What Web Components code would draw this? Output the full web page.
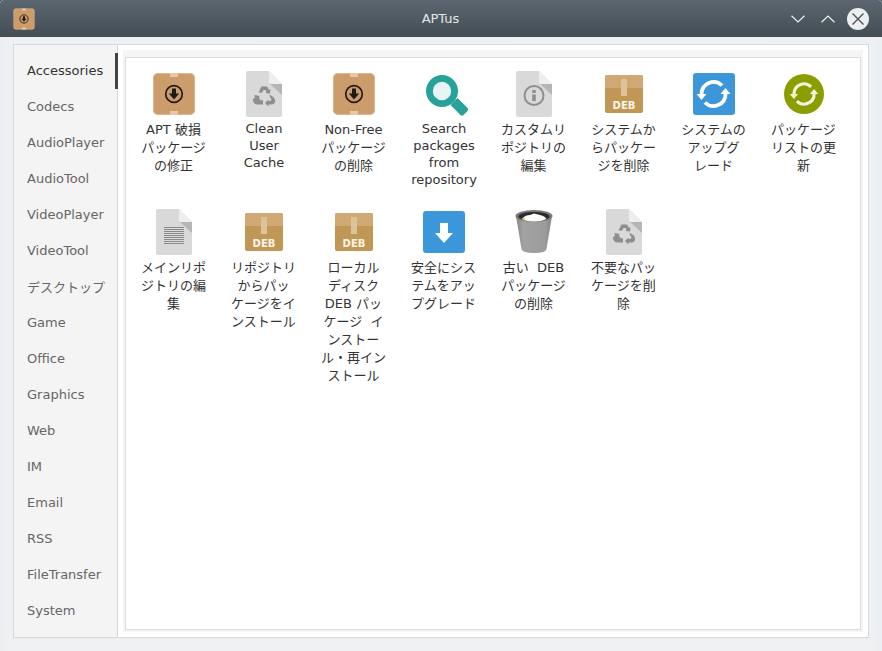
<!DOCTYPE html>
<html><head><meta charset="utf-8">
<style>
html,body{margin:0;padding:0;height:100%;background:#3a4650;overflow:hidden}
body{font:13px "DejaVu Sans","Noto Sans CJK JP",sans-serif}
</style></head>
<body>
<aptus-window>
  <aptus-titlebar title="APTus"></aptus-titlebar>
  <aptus-frame>
    <aptus-sidebar slot="side">
      <side-item active>Accessories</side-item><side-item>Codecs</side-item><side-item>AudioPlayer</side-item><side-item>AudioTool</side-item><side-item>VideoPlayer</side-item><side-item>VideoTool</side-item><side-item>デスクトップ</side-item><side-item>Game</side-item><side-item>Office</side-item><side-item>Graphics</side-item><side-item>Web</side-item><side-item>IM</side-item><side-item>Email</side-item><side-item>RSS</side-item><side-item>FileTransfer</side-item><side-item>System</side-item>
    </aptus-sidebar>
    <app-grid slot="main">
      <app-item icon="box" cjk>APT 破損<br>パッケージ<br>の修正</app-item>
      <app-item icon="recycle">Clean<br>User<br>Cache</app-item>
      <app-item icon="box" cjk>Non-Free<br>パッケージ<br>の削除</app-item>
      <app-item icon="search">Search<br>packages<br>from<br>repository</app-item>
      <app-item icon="info" cjk>カスタムリ<br>ポジトリの<br>編集</app-item>
      <app-item icon="deb" cjk>システムか<br>らパッケー<br>ジを削除</app-item>
      <app-item icon="upgrade" cjk>システムの<br>アップグ<br>レード</app-item>
      <app-item icon="update" cjk>パッケージ<br>リストの更<br>新</app-item>
      <app-item icon="text" cjk>メインリポ<br>ジトリの編<br>集</app-item>
      <app-item icon="deb" cjk>リポジトリ<br>からパッ<br>ケージをイ<br>ンストール</app-item>
      <app-item icon="deb" cjk>ローカル<br>ディスク<br>DEB パッ<br>ケージ&nbsp;&nbsp;イ<br>ンストー<br>ル・再イン<br>ストール</app-item>
      <app-item icon="download" cjk>安全にシス<br>テムをアッ<br>プグレード</app-item>
      <app-item icon="trash" cjk>古い&nbsp;&nbsp;DEB<br>パッケージ<br>の削除</app-item>
      <app-item icon="recycle" cjk>不要なパッ<br>ケージを削<br>除</app-item>
    </app-grid>
  </aptus-frame>
</aptus-window>
<script>
const rec=`<path d="M18.500 22.500 21.500 16.500H27L29 20 30.500 19 30 23.500 25.500 23 26.500 21.500 25.500 20H23.500L22 22.800Z"/><path d="M14.500 25 20 26 18.800 27 20.500 30.200H23V34.500H17Q15 34.500 14 32.800L13 31Q12.500 29.500 13.500 28.500L14.800 28.200Z"/><path d="M29.500 24.500 33.800 27.500 35 30Q35.500 31.500 34.500 33 33.500 34.500 31.500 34.500H28.500V36.500L25 33 28.500 29.500V31H30.500L31.500 29.500 30.200 27.500Z"/>`;
const fileBase=(inner)=>`<path d="M8 1H29L42 14V45Q42 47 40 47H8Q6 47 6 45V3Q6 1 8 1Z" fill="#d9d9d9"/><path d="M30 14H42V25Z" fill="#b5b5b5"/><path d="M29 1L42 14H31Q29 14 29 12Z" fill="#eeeeee"/>${inner}`;
const box=`<rect x="3" y="3" width="42" height="42" rx="5" fill="#cc9c6b"/><rect x="3.500" y="3.500" width="41" height="41" rx="4.500" fill="none" stroke="#e6c8a6" stroke-opacity=".6"/><rect x="20" y="3" width="8" height="4" fill="#e8c8a8"/><rect x="20" y="41" width="8" height="4" fill="#e8c8a8"/><circle cx="24" cy="24" r="8.300" fill="none" stroke="#1e1a16" stroke-width="1.700"/><path d="M22 18.500h4v5h3.200L24 29.500l-5.200-6H22z" fill="#1e1a16"/>`;
const deb=`<rect x="5" y="5" width="38" height="38" rx="2" fill="#c19755"/><path d="M5 18V7q0-2 2-2h34q2 0 2 2v11z" fill="#d0a974"/><rect x="21" y="9" width="6" height="17" fill="#dcc39c"/><text x="24" y="38.500" text-anchor="middle" font-family="DejaVu Sans" font-weight="700" font-size="10" fill="#fbf5ea">DEB</text>`;
const sync=(c)=>`<g fill="none" stroke="${c}" stroke-width="3.800"><path d="M8.500-8.500A12 12 0 0 0-12 0"/><path d="M-8.500 8.500A12 12 0 0 0 12 0"/></g><path d="M-17 0H-7L-12 6Z M17 0H7L12-6Z" fill="${c}"/>`;
const ICONS={
 box,deb,
 recycle:fileBase(`<g fill="#8e8e8e">${rec}</g>`),
 info:fileBase(`<circle cx="24" cy="25.500" r="9.500" fill="none" stroke="#8e8e8e" stroke-width="2"/><rect x="22.200" y="24.500" width="3.600" height="6.500" fill="#8e8e8e"/><rect x="22.200" y="20" width="3.600" height="3" fill="#8e8e8e"/>`),
 text:fileBase(`<g fill="#8a8a8a">${[...Array(9)].map((_,i)=>`<rect x="14" y="${19+i*2}" width="20" height="1"/>`).join('')}</g>`),
 search:`<path d="M34 36l7-7 10 10q1.500 1.500 0 3l-4 4q-1.500 1.500-3 0z" transform="translate(-3.500 -1)" fill="#26a298"/><circle cx="22" cy="21" r="12.600" fill="#e8f4f3" stroke="#26a298" stroke-width="6.800"/>`,
 upgrade:`<rect x="3" y="3" width="42" height="42" rx="3" fill="#3b97d9"/><g transform="translate(23.500 24)">${sync('#fff')}</g>`,
 update:`<circle cx="24" cy="24" r="20" fill="#8a9e00"/><g transform="translate(24 24) scale(.84)">${sync('#eff3dc')}</g>`,
 download:`<rect x="3" y="3" width="42" height="42" rx="3" fill="#3b97d9"/><path d="M20 15h8v10h5L24 35 15 25h5z" fill="#fff"/>`,
 trash:`<defs><linearGradient id="t" x1="0" x2="1"><stop offset="0" stop-color="#888"/><stop offset=".2" stop-color="#a2a2a2"/><stop offset=".8" stop-color="#9c9c9c"/><stop offset="1" stop-color="#858585"/></linearGradient></defs><path d="M6 8Q7 14 11.500 41q.5 4 12.500 4t12.500-4Q41 14 42 8z" fill="url(#t)"/><ellipse cx="24" cy="8" rx="18.500" ry="6" fill="#777"/><ellipse cx="24" cy="8.500" rx="15.500" ry="4.600" fill="#2b2b2b"/><path d="M12 11q3-4 8-4l4-1.500 6 1.500q5 1 6.500 4-5 2.500-12.500 2.500T12 11z" fill="#fbfbf8"/><path d="M11.500 10.500q2 2 4.500 2.500l-1.500-3z" fill="#e5c54f"/>`
};
function def(name,html,init){
 customElements.define(name,class extends HTMLElement{
  constructor(){super();this.attachShadow({mode:'open'}).innerHTML=html;}
  connectedCallback(){init&&init(this);}
 });
}
def('pkg-icon',`<style>:host{display:block;width:48px;height:48px}svg{display:block;width:100%;height:100%}</style><svg viewBox="0 0 48 48" xmlns="http://www.w3.org/2000/svg"></svg>`,
 el=>{el.shadowRoot.querySelector('svg').innerHTML=ICONS[el.getAttribute('name')]||'';});
def('aptus-window',`<style>:host{display:flex;flex-direction:column;width:882px;height:651px;background:#eff0f1;border-radius:4px 4px 0 0;overflow:hidden;box-shadow:inset 5px 0 0 #ecf0f3,inset -6px 0 0 #ecf0f3}</style><slot></slot>`);
def('aptus-titlebar',`<style>
:host{display:grid;grid-template-columns:1fr auto 1fr;align-items:center;height:37px;flex:none;padding:0 13px 0 12px;box-sizing:border-box;background:linear-gradient(#5b6670,#434d54);color:#e4e7ea;font:13px "DejaVu Sans",sans-serif}
pkg-icon{width:24px;height:24px}
.btns{display:flex;justify-content:flex-end;align-items:center}
svg{display:block}
</style><pkg-icon name="box"></pkg-icon><span id="t"></span><div class="btns">
<svg width="14" height="8" viewBox="0 0 14 8" style="margin-right:16px"><path d="M.5.8 7 7 13.500.8" fill="none" stroke="#eef0f2" stroke-width="1.200"/></svg>
<svg width="14" height="8" viewBox="0 0 14 8" style="margin-right:12px"><path d="M.5 7.200 7 1 13.500 7.200" fill="none" stroke="#eef0f2" stroke-width="1.200"/></svg>
<svg width="22" height="22" viewBox="0 0 22 22"><circle cx="11" cy="11" r="11" fill="#eceeef"/><path d="M5.500 5.500l11 11M16.500 5.500l-11 11" stroke="#4a545c" stroke-width="1.400"/></svg>
</div>`,el=>{el.shadowRoot.getElementById('t').textContent=el.getAttribute('title');});
def('aptus-frame',`<style>
:host{display:flex;flex:1;min-height:0;margin:7px 13px 13px 13px;border:1px solid #d8d8d8;background:#fff;box-sizing:border-box}
.side{flex:none;width:103px;background:#f4f4f4;border-right:1px solid #d8d8d8;padding-top:7px;box-sizing:content-box}
.main{flex:1;min-width:0;padding:5px;display:flex}
.well{flex:1;min-width:0;background:#f5f5f5;padding:7px 2px 2px 2px;display:flex}
.box{flex:1;min-width:0;background:#fff;border:1px solid #dcdcdc}
</style><div class="side"><slot name="side"></slot></div><div class="main"><div class="well"><div class="box"><slot name="main"></slot></div></div></div>`);
def('aptus-sidebar',`<style>:host{display:flex;flex-direction:column}</style><slot></slot>`);
def('side-item',`<style>
:host{display:flex;align-items:center;height:36px;padding-left:13px;color:#666;position:relative;white-space:nowrap;font-size:13px;box-sizing:border-box}
:host([active]){color:#333}
:host([active])::after{content:"";position:absolute;right:-1px;top:1px;width:3px;height:36px;background:#444}
</style><slot></slot>`);
def('app-grid',`<style>:host{display:grid;grid-template-columns:repeat(8,90px);grid-auto-rows:138px;padding-left:3px}</style><slot></slot>`);
def('app-item',`<style>
:host{display:flex;flex-direction:column;align-items:center;padding-top:12px;color:#333;font-size:13px;line-height:17px;text-align:center;white-space:nowrap;box-sizing:border-box;min-height:0}
:host([cjk]){line-height:18px}
.t{margin-top:2px}
:host([cjk]) .t{margin-top:3px;margin-left:-1px}
</style><pkg-icon></pkg-icon><div class="t"><slot></slot></div>`,
 el=>{el.shadowRoot.querySelector('pkg-icon').setAttribute('name',el.getAttribute('icon'));
      const i=el.shadowRoot.querySelector('pkg-icon');i.connectedCallback&&i.connectedCallback();});
</script>
</body></html>
